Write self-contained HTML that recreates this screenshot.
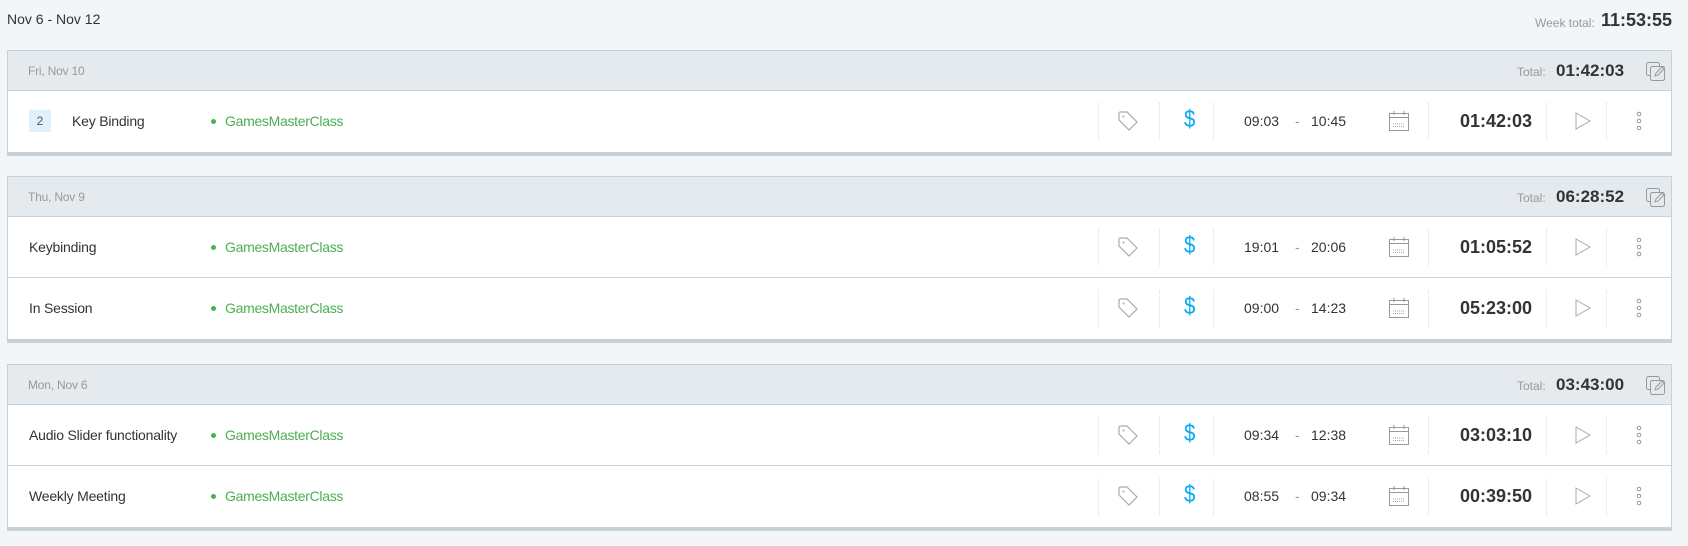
<!DOCTYPE html>
<html><head><meta charset="utf-8"><style>
*{box-sizing:border-box;margin:0;padding:0}
body{width:1688px;height:546px;background:#f2f6f8;font-family:"Liberation Sans",Arial,sans-serif;position:relative;overflow:hidden;color:#333}
.abs{position:absolute}
.card{position:absolute;left:7px;width:1665px;border:1px solid #c6d2d9;background:#fff;border-bottom:4px solid #c6d2d9}
.hd{height:40px;background:#e4eaee;border-bottom:1px solid #c6d2d9;position:relative}
.hd .d{position:absolute;left:20px;top:13px;font-size:12px;color:#999;letter-spacing:-0.2px}
.hd .tl{position:absolute;left:1509px;top:14px;font-size:12px;color:#999}
.hd .tv{position:absolute;left:1548px;top:10px;font-size:17px;font-weight:bold;color:#333}
.hd svg{position:absolute;left:1637px;top:10px}
.row{height:61px;position:relative;border-bottom:1px solid #c6d2d9}
.row:last-child{border-bottom:none}
.row>*{position:absolute}
.t{left:21px;top:22px;font-size:14px;color:#333;letter-spacing:-0.2px}
.b{left:21px;top:19px;width:22px;height:22px;background:#e1f1fb;color:#555;font-size:12px;text-align:center;line-height:22px}
.p{left:217px;top:22px;font-size:14px;color:#4caf50;letter-spacing:-0.3px}
.p:before{content:"";position:absolute;left:-14px;top:6px;width:5px;height:5px;border-radius:50%;background:#4caf50}
.sep{top:12px;height:37px;border-left:1px dotted #d5dde2}
.tm{top:22px;font-size:14px;color:#333}
.dur{left:1452px;top:20px;font-size:18px;font-weight:bold;color:#333}
.dol{left:1175px;top:15px;font-size:24px;color:#03a9f4;transform:scaleX(0.85)}
</style></head><body>
<div class="abs" style="left:7px;top:11px;font-size:14px;color:#333">Nov 6 - Nov 12</div>
<div class="abs" style="left:1535px;top:16px;font-size:12px;color:#999">Week total:</div>
<div class="abs" style="left:1601px;top:10px;font-size:18px;font-weight:bold;color:#333">11:53:55</div>

<svg width="0" height="0" style="position:absolute"><defs>
<symbol id="tag" viewBox="0 0 24 24"><path d="M3 4v7l10 10 8-8L11 3H4z" fill="none" stroke="#aaa" stroke-width="1.2"/><circle cx="7.5" cy="7.5" r="1" fill="#aaa"/></symbol>
<symbol id="cal" viewBox="0 0 22 22"><rect x="1.5" y="3.5" width="19" height="17" fill="none" stroke="#999"/><line x1="1.5" y1="7.5" x2="20.5" y2="7.5" stroke="#999"/><line x1="6" y1="1" x2="6" y2="5" stroke="#999"/><line x1="16" y1="1" x2="16" y2="5" stroke="#999"/><path d="M5 14h12M5 16.5h12" stroke="#aaa" stroke-dasharray="1 1"/></symbol>
<symbol id="play" viewBox="0 0 20 20"><path d="M3 2l14 8-14 8z" fill="none" stroke="#aaa"/></symbol>
<symbol id="dots" viewBox="0 0 8 22"><circle cx="4" cy="4" r="1.8" fill="none" stroke="#999"/><circle cx="4" cy="11" r="1.8" fill="none" stroke="#999"/><circle cx="4" cy="18" r="1.8" fill="none" stroke="#999"/></symbol>
<symbol id="cp" viewBox="0 0 22 22"><rect x="1.5" y="1.5" width="13" height="13" rx="2" fill="none" stroke="#999"/><rect x="5.5" y="5.5" width="14" height="14" rx="2" fill="#e4eaee" stroke="#999"/><path d="M10 15l1-3 6-6 2 2-6 6z" fill="none" stroke="#999"/></symbol>
</defs></svg>

<div class="card" style="top:50px">
 <div class="hd"><span class="d">Fri, Nov 10</span><span class="tl">Total:</span><span class="tv">01:42:03</span><svg width="22" height="22"><use href="#cp"/></svg></div>
 <div class="row"><span class="b">2</span><span class="t" style="left:64px">Key Binding</span><span class="p">GamesMasterClass</span>
  <span class="sep" style="left:1090px"></span><svg style="left:1108px;top:18px" width="24" height="24"><use href="#tag"/></svg><span class="sep" style="left:1151px"></span><span class="dol">$</span><span class="sep" style="left:1205px"></span>
  <span class="tm" style="left:1236px">09:03</span><span class="tm" style="left:1287px;color:#999">-</span><span class="tm" style="left:1303px">10:45</span>
  <svg style="left:1380px;top:19px" width="22" height="22"><use href="#cal"/></svg><span class="sep" style="left:1420px"></span>
  <span class="dur">01:42:03</span><span class="sep" style="left:1538px"></span><svg style="left:1565px;top:20px" width="20" height="20"><use href="#play"/></svg><span class="sep" style="left:1598px"></span><svg style="left:1627px;top:19px" width="8" height="22"><use href="#dots"/></svg></div>
</div>

<div class="card" style="top:176px">
 <div class="hd"><span class="d">Thu, Nov 9</span><span class="tl">Total:</span><span class="tv">06:28:52</span><svg width="22" height="22"><use href="#cp"/></svg></div>
 <div class="row"><span class="t">Keybinding</span><span class="p">GamesMasterClass</span>
  <span class="sep" style="left:1090px"></span><svg style="left:1108px;top:18px" width="24" height="24"><use href="#tag"/></svg><span class="sep" style="left:1151px"></span><span class="dol">$</span><span class="sep" style="left:1205px"></span>
  <span class="tm" style="left:1236px">19:01</span><span class="tm" style="left:1287px;color:#999">-</span><span class="tm" style="left:1303px">20:06</span>
  <svg style="left:1380px;top:19px" width="22" height="22"><use href="#cal"/></svg><span class="sep" style="left:1420px"></span>
  <span class="dur">01:05:52</span><span class="sep" style="left:1538px"></span><svg style="left:1565px;top:20px" width="20" height="20"><use href="#play"/></svg><span class="sep" style="left:1598px"></span><svg style="left:1627px;top:19px" width="8" height="22"><use href="#dots"/></svg></div>
 <div class="row"><span class="t">In Session</span><span class="p">GamesMasterClass</span>
  <span class="sep" style="left:1090px"></span><svg style="left:1108px;top:18px" width="24" height="24"><use href="#tag"/></svg><span class="sep" style="left:1151px"></span><span class="dol">$</span><span class="sep" style="left:1205px"></span>
  <span class="tm" style="left:1236px">09:00</span><span class="tm" style="left:1287px;color:#999">-</span><span class="tm" style="left:1303px">14:23</span>
  <svg style="left:1380px;top:19px" width="22" height="22"><use href="#cal"/></svg><span class="sep" style="left:1420px"></span>
  <span class="dur">05:23:00</span><span class="sep" style="left:1538px"></span><svg style="left:1565px;top:20px" width="20" height="20"><use href="#play"/></svg><span class="sep" style="left:1598px"></span><svg style="left:1627px;top:19px" width="8" height="22"><use href="#dots"/></svg></div>
</div>

<div class="card" style="top:364px">
 <div class="hd"><span class="d">Mon, Nov 6</span><span class="tl">Total:</span><span class="tv">03:43:00</span><svg width="22" height="22"><use href="#cp"/></svg></div>
 <div class="row"><span class="t">Audio Slider functionality</span><span class="p">GamesMasterClass</span>
  <span class="sep" style="left:1090px"></span><svg style="left:1108px;top:18px" width="24" height="24"><use href="#tag"/></svg><span class="sep" style="left:1151px"></span><span class="dol">$</span><span class="sep" style="left:1205px"></span>
  <span class="tm" style="left:1236px">09:34</span><span class="tm" style="left:1287px;color:#999">-</span><span class="tm" style="left:1303px">12:38</span>
  <svg style="left:1380px;top:19px" width="22" height="22"><use href="#cal"/></svg><span class="sep" style="left:1420px"></span>
  <span class="dur">03:03:10</span><span class="sep" style="left:1538px"></span><svg style="left:1565px;top:20px" width="20" height="20"><use href="#play"/></svg><span class="sep" style="left:1598px"></span><svg style="left:1627px;top:19px" width="8" height="22"><use href="#dots"/></svg></div>
 <div class="row"><span class="t">Weekly Meeting</span><span class="p">GamesMasterClass</span>
  <span class="sep" style="left:1090px"></span><svg style="left:1108px;top:18px" width="24" height="24"><use href="#tag"/></svg><span class="sep" style="left:1151px"></span><span class="dol">$</span><span class="sep" style="left:1205px"></span>
  <span class="tm" style="left:1236px">08:55</span><span class="tm" style="left:1287px;color:#999">-</span><span class="tm" style="left:1303px">09:34</span>
  <svg style="left:1380px;top:19px" width="22" height="22"><use href="#cal"/></svg><span class="sep" style="left:1420px"></span>
  <span class="dur">00:39:50</span><span class="sep" style="left:1538px"></span><svg style="left:1565px;top:20px" width="20" height="20"><use href="#play"/></svg><span class="sep" style="left:1598px"></span><svg style="left:1627px;top:19px" width="8" height="22"><use href="#dots"/></svg></div>
</div>
</body></html>
